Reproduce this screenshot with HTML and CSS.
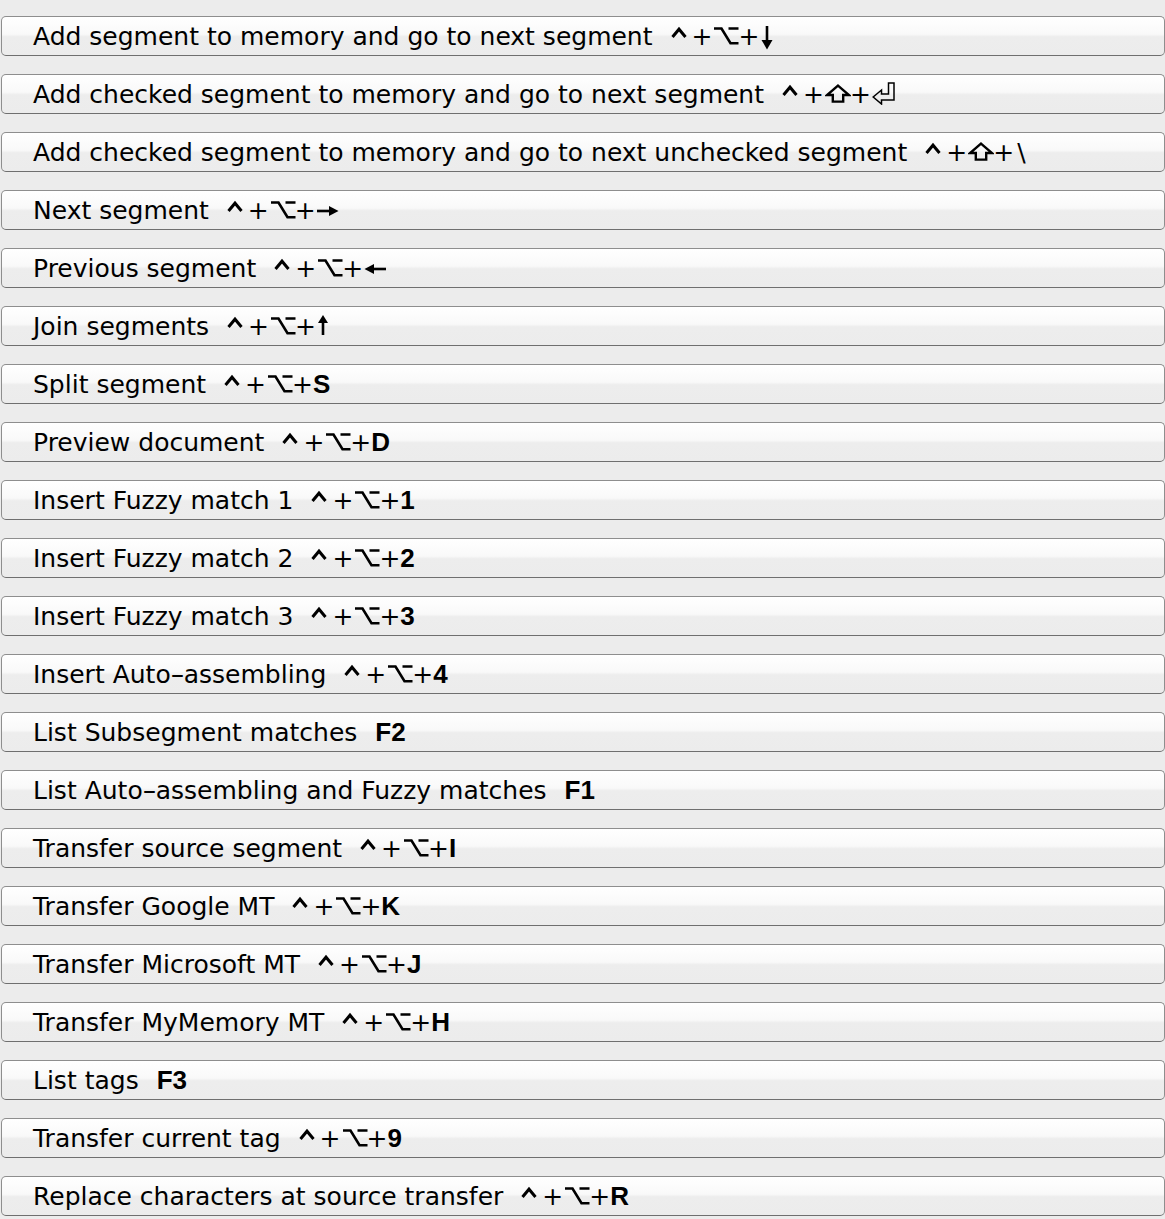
FILE: index.html
```html
<!DOCTYPE html>
<html>
<head>
<meta charset="utf-8">
<link rel="stylesheet" href="styles.css">
</head>
<body>
<svg class="defs" xmlns="http://www.w3.org/2000/svg">
  <symbol id="i-ctrl" viewBox="0 0 16 19"><polyline points="1.5,11 8,3.2 14.5,11" fill="none" stroke="#000" stroke-width="3"/></symbol>
  <symbol id="i-opt" viewBox="0 0 26 19"><path d="M1 2.5 H8.5 L17.5 17.2 H25.5 M15.5 2.5 H25.5" fill="none" stroke="#000" stroke-width="2.6"/></symbol>
  <symbol id="i-shift" viewBox="0 0 26 19"><polygon points="13,1.6 24,11 18.2,11 18.2,17.6 7.8,17.6 7.8,11 2,11" fill="none" stroke="#000" stroke-width="2.4" stroke-linejoin="miter"/></symbol>
  <symbol id="i-ret" viewBox="0 0 24 23"><polygon points="16.5,1 22,1 22,18 9.5,18 9.5,22 1.2,15 9.5,8 9.5,12 16.5,12" fill="none" stroke="#000" stroke-width="1.5"/></symbol>
  <symbol id="i-down" viewBox="0 0 14 24"><line x1="7" y1="0" x2="7" y2="16" stroke="#000" stroke-width="2.6"/><polygon points="1.5,14 12.5,14 7,23.5" fill="#000"/></symbol>
  <symbol id="i-up" viewBox="0 0 12 20"><line x1="6" y1="6" x2="6" y2="20" stroke="#000" stroke-width="2.6"/><polygon points="1,8 11,8 6,0" fill="#000"/></symbol>
  <symbol id="i-right" viewBox="0 0 22 12"><line x1="0" y1="6" x2="14" y2="6" stroke="#000" stroke-width="2.6"/><polygon points="12,1 21.5,6 12,11" fill="#000"/></symbol>
  <symbol id="i-left" viewBox="0 0 22 12"><line x1="8" y1="6" x2="22" y2="6" stroke="#000" stroke-width="2.6"/><polygon points="10,1 0.5,6 10,11" fill="#000"/></symbol>
</svg>
<div class="list">
  <div class="btn"><span class="label">Add segment to memory and go to next segment</span><span class="keys"><svg class="ic ctrl"><use href="#i-ctrl"/></svg>+<svg class="ic opt"><use href="#i-opt"/></svg>+<svg class="ic down"><use href="#i-down"/></svg></span></div>
  <div class="btn"><span class="label">Add checked segment to memory and go to next segment</span><span class="keys"><svg class="ic ctrl"><use href="#i-ctrl"/></svg>+<svg class="ic shift"><use href="#i-shift"/></svg>+<svg class="ic ret"><use href="#i-ret"/></svg></span></div>
  <div class="btn"><span class="label">Add checked segment to memory and go to next unchecked segment</span><span class="keys"><svg class="ic ctrl"><use href="#i-ctrl"/></svg>+<svg class="ic shift"><use href="#i-shift"/></svg>+<span class="bs">\</span></span></div>
  <div class="btn"><span class="label">Next segment</span><span class="keys"><svg class="ic ctrl"><use href="#i-ctrl"/></svg>+<svg class="ic opt"><use href="#i-opt"/></svg>+<svg class="ic horiz"><use href="#i-right"/></svg></span></div>
  <div class="btn"><span class="label">Previous segment</span><span class="keys"><svg class="ic ctrl"><use href="#i-ctrl"/></svg>+<svg class="ic opt"><use href="#i-opt"/></svg>+<svg class="ic horiz"><use href="#i-left"/></svg></span></div>
  <div class="btn"><span class="label">Join segments</span><span class="keys"><svg class="ic ctrl"><use href="#i-ctrl"/></svg>+<svg class="ic opt"><use href="#i-opt"/></svg>+<svg class="ic up"><use href="#i-up"/></svg></span></div>
  <div class="btn"><span class="label">Split segment</span><span class="keys"><svg class="ic ctrl"><use href="#i-ctrl"/></svg>+<svg class="ic opt"><use href="#i-opt"/></svg>+<b>S</b></span></div>
  <div class="btn"><span class="label">Preview document</span><span class="keys"><svg class="ic ctrl"><use href="#i-ctrl"/></svg>+<svg class="ic opt"><use href="#i-opt"/></svg>+<b>D</b></span></div>
  <div class="btn"><span class="label">Insert Fuzzy match 1</span><span class="keys"><svg class="ic ctrl"><use href="#i-ctrl"/></svg>+<svg class="ic opt"><use href="#i-opt"/></svg>+<b>1</b></span></div>
  <div class="btn"><span class="label">Insert Fuzzy match 2</span><span class="keys"><svg class="ic ctrl"><use href="#i-ctrl"/></svg>+<svg class="ic opt"><use href="#i-opt"/></svg>+<b>2</b></span></div>
  <div class="btn"><span class="label">Insert Fuzzy match 3</span><span class="keys"><svg class="ic ctrl"><use href="#i-ctrl"/></svg>+<svg class="ic opt"><use href="#i-opt"/></svg>+<b>3</b></span></div>
  <div class="btn"><span class="label">Insert Auto<span class="hy">-</span>assembling</span><span class="keys"><svg class="ic ctrl"><use href="#i-ctrl"/></svg>+<svg class="ic opt"><use href="#i-opt"/></svg>+<b>4</b></span></div>
  <div class="btn"><span class="label">List Subsegment matches</span><span class="keys"><b>F2</b></span></div>
  <div class="btn"><span class="label">List Auto<span class="hy">-</span>assembling and Fuzzy matches</span><span class="keys"><b>F1</b></span></div>
  <div class="btn"><span class="label">Transfer source segment</span><span class="keys"><svg class="ic ctrl"><use href="#i-ctrl"/></svg>+<svg class="ic opt"><use href="#i-opt"/></svg>+<b>I</b></span></div>
  <div class="btn"><span class="label">Transfer Google MT</span><span class="keys"><svg class="ic ctrl"><use href="#i-ctrl"/></svg>+<svg class="ic opt"><use href="#i-opt"/></svg>+<b>K</b></span></div>
  <div class="btn"><span class="label">Transfer Microsoft MT</span><span class="keys"><svg class="ic ctrl"><use href="#i-ctrl"/></svg>+<svg class="ic opt"><use href="#i-opt"/></svg>+<b>J</b></span></div>
  <div class="btn"><span class="label">Transfer MyMemory MT</span><span class="keys"><svg class="ic ctrl"><use href="#i-ctrl"/></svg>+<svg class="ic opt"><use href="#i-opt"/></svg>+<b>H</b></span></div>
  <div class="btn"><span class="label">List tags</span><span class="keys"><b>F3</b></span></div>
  <div class="btn"><span class="label">Transfer current tag</span><span class="keys"><svg class="ic ctrl"><use href="#i-ctrl"/></svg>+<svg class="ic opt"><use href="#i-opt"/></svg>+<b>9</b></span></div>
  <div class="btn"><span class="label">Replace characters at source transfer</span><span class="keys"><svg class="ic ctrl"><use href="#i-ctrl"/></svg>+<svg class="ic opt"><use href="#i-opt"/></svg>+<b>R</b></span></div>
</div>
</body>
</html>
```
FILE: styles.css
```css
html, body {
  margin: 0;
  padding: 0;
  background: #ececec;
}
body {
  font-family: "DejaVu Sans", "Liberation Sans", sans-serif;
  color: #000;
}
.defs {
  display: block;
  width: 0;
  height: 0;
  overflow: hidden;
}
.list {
  display: flex;
  flex-direction: column;
  gap: 18px;
  padding: 16px 0 0 1px;
}
.btn {
  box-sizing: border-box;
  height: 40px;
  border: 1px solid #8e8e8e;
  border-bottom-color: #6f6f6f;
  border-radius: 5px;
  background: linear-gradient(to bottom, #ffffff 0%, #f9f9f9 45%, #ededed 52%, #ececec 100%);
  display: flex;
  align-items: center;
  padding-left: 31px;
  font-size: 25px;
  white-space: nowrap;
}
.hy {
  display: inline-block;
  transform: scaleX(1.6);
  margin: 0 2px;
}
.keys {
  margin-left: 18px;
}
.ic {
  display: inline-block;
  overflow: visible;
}
.ctrl {
  width: 16px;
  height: 19px;
  vertical-align: 0;
  margin-right: 5px;
}
.opt {
  width: 26px;
  height: 19px;
  vertical-align: 0;
  margin: 0 -1px 0 1px;
}
.shift {
  width: 26px;
  height: 19px;
  vertical-align: 0;
  margin: 0 -1px 0 1px;
}
.ret {
  width: 24px;
  height: 23px;
  vertical-align: -2px;
  margin-left: 1px;
}
.down {
  width: 14px;
  height: 24px;
  vertical-align: -5px;
  margin-left: 1px;
}
.up {
  width: 12px;
  height: 20px;
  vertical-align: 0;
  margin-left: 1px;
}
.horiz {
  width: 22px;
  height: 12px;
  vertical-align: 2px;
  margin-left: 1px;
}
.bs {
  margin-left: 3px;
}
b {
  font-family: "Liberation Sans", "DejaVu Sans", sans-serif;
  font-weight: bold;
  font-size: 26px;
}
```
